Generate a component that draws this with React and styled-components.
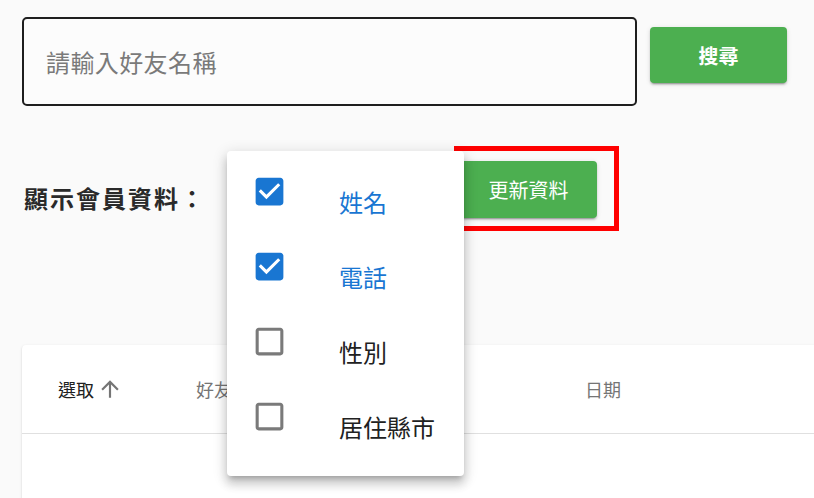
import React, { useState } from 'react';
import styled, { createGlobalStyle } from 'styled-components';

const GlobalStyle = createGlobalStyle`
  body {
    margin: 0;
    padding: 0;
    background-color: #fafafa;
    font-family: 'Noto Sans CJK TC', 'Noto Sans', sans-serif;
    color: #212121;
    overflow: hidden;
  }
`;

const Page = styled.div`
  position: relative;
  box-sizing: border-box;
  width: 100vw;
  height: 100vh;
  overflow: hidden;
  padding: 17px 0 0 22px;
`;

const SearchRow = styled.div`
  display: flex;
  align-items: flex-start;
  gap: 13px;
`;

const SearchInput = styled.input`
  box-sizing: border-box;
  width: 615px;
  height: 89px;
  border: 2px solid #1e1e1e;
  border-radius: 5px;
  background: #fcfcfc;
  padding: 0 22px;
  font-family: inherit;
  font-size: 24px;
  letter-spacing: 0.4px;
  color: #212121;
  outline: none;
  &::placeholder {
    color: #7a7a7a;
  }
`;

const GreenButton = styled.button`
  box-sizing: border-box;
  width: 137px;
  height: ${(p) => (p.$tall ? 57 : 56)}px;
  margin-top: ${(p) => p.$offset || 0}px;
  border: none;
  border-radius: 4px;
  background-color: #4caf50;
  color: #ffffff;
  font-family: inherit;
  font-size: 20px;
  font-weight: ${(p) => (p.$bold ? 700 : 400)};
  box-shadow: 0 3px 1px -2px rgba(0, 0, 0, 0.2), 0 2px 2px 0 rgba(0, 0, 0, 0.14),
    0 1px 5px 0 rgba(0, 0, 0, 0.12);
  cursor: pointer;
`;

const ControlRow = styled.div`
  display: flex;
  align-items: center;
  margin-top: 40px;
`;

const FieldLabel = styled.div`
  font-size: 24px;
  font-weight: 700;
  letter-spacing: 2px;
  color: #2a2a2a;
  margin-top: 17px;
  width: 430px;
  padding-left: 2px;
`;

const Highlight = styled.div`
  border: 5px solid #ff0000;
  padding: 10px 17px 8px 1px;
`;

const Menu = styled.div`
  position: absolute;
  top: 151px;
  left: 227px;
  width: 237px;
  box-sizing: border-box;
  padding: 8px 0 17px;
  background: #ffffff;
  border-radius: 4px;
  box-shadow: 0 5px 5px -3px rgba(0, 0, 0, 0.2), 0 8px 10px 1px rgba(0, 0, 0, 0.14),
    0 3px 14px 2px rgba(0, 0, 0, 0.12);
  z-index: 10;
`;

const MenuItem = styled.div`
  display: flex;
  align-items: flex-start;
  height: 75px;
  padding-left: 24px;
  cursor: pointer;
`;

const CheckIcon = styled.svg`
  width: 37px;
  height: 37px;
  margin-top: 14px;
  flex-shrink: 0;
  fill: ${(p) => (p.$checked ? '#1976d2' : '#7a7a7a')};
`;

const ItemText = styled.span`
  margin-top: 31px;
  margin-left: 51px;
  font-size: 24px;
  line-height: 24px;
  color: ${(p) => (p.$checked ? '#1976d2' : '#212121')};
`;

const TableCard = styled.div`
  margin-top: 114px;
  width: calc(100% + 20px);
  height: 200px;
  background: #ffffff;
  border-radius: 4px;
  box-shadow: 0 2px 1px -1px rgba(0, 0, 0, 0.2), 0 1px 1px 0 rgba(0, 0, 0, 0.14),
    0 1px 3px 0 rgba(0, 0, 0, 0.12);
`;

const HeaderRow = styled.div`
  display: grid;
  grid-template-columns: 138px 389px 1fr;
  align-items: center;
  height: 88px;
  padding-left: 36px;
  border-bottom: 1px solid #e0e0e0;
`;

const HeaderCell = styled.div`
  display: flex;
  align-items: center;
  gap: 3px;
  font-size: 18px;
  color: ${(p) => (p.$active ? '#212121' : '#757575')};
`;

const SortIcon = styled.svg`
  width: 26px;
  height: 26px;
  fill: #757575;
`;

const CHECKED = 'M19 3H5c-1.11 0-2 .9-2 2v14c0 1.1.89 2 2 2h14c1.11 0 2-.9 2-2V5c0-1.1-.89-2-2-2zm-9 14l-5-5 1.41-1.41L10 14.17l7.59-7.59L19 8l-9 9z';
const BLANK = 'M19 5v14H5V5h14m0-2H5c-1.1 0-2 .9-2 2v14c0 1.1.9 2 2 2h14c1.1 0 2-.9 2-2V5c0-1.1-.9-2-2-2z';

const fields = [
  { label: '姓名', checked: true },
  { label: '電話', checked: true },
  { label: '性別', checked: false },
  { label: '居住縣市', checked: false },
];

const App = () => {
  const [keyword, setKeyword] = useState('');
  const [selected, setSelected] = useState(fields.map((f) => f.checked));

  const toggle = (i) => {
    setSelected((prev) => prev.map((v, j) => (j === i ? !v : v)));
  };

  return (
    <>
      <GlobalStyle />
      <Page>
        <SearchRow>
          <SearchInput
            placeholder="請輸入好友名稱"
            value={keyword}
            onChange={(e) => setKeyword(e.target.value)}
          />
          <GreenButton $offset={10} $bold>搜尋</GreenButton>
        </SearchRow>

        <ControlRow>
          <FieldLabel>顯示會員資料：</FieldLabel>
          <Highlight>
            <GreenButton $tall>更新資料</GreenButton>
          </Highlight>
        </ControlRow>

        <Menu>
          {fields.map((f, i) => (
            <MenuItem key={f.label} onClick={() => toggle(i)}>
              <CheckIcon viewBox="0 0 24 24" $checked={selected[i]}>
                <path d={selected[i] ? CHECKED : BLANK} />
              </CheckIcon>
              <ItemText $checked={selected[i]}>{f.label}</ItemText>
            </MenuItem>
          ))}
        </Menu>

        <TableCard>
          <HeaderRow>
            <HeaderCell $active>
              選取
              <SortIcon viewBox="0 0 24 24">
                <path d="M4 12l1.41 1.41L11 7.83V20h2V7.83l5.58 5.59L20 12l-8-8-8 8z" />
              </SortIcon>
            </HeaderCell>
            <HeaderCell>好友名稱</HeaderCell>
            <HeaderCell>日期</HeaderCell>
          </HeaderRow>
        </TableCard>
      </Page>
    </>
  );
};

export default App;
